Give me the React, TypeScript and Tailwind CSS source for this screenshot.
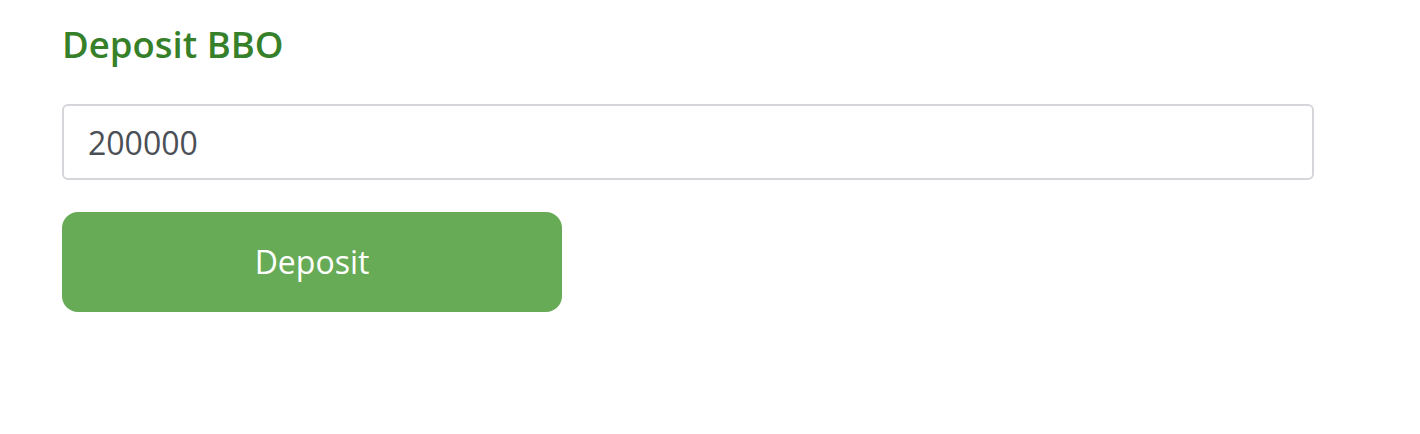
import React from 'react';

export default function App() {
  return (
    <div className="min-h-screen bg-white font-['Open_Sans',sans-serif]">
      <div className="pl-[62px] pt-[20px] w-[1314px]">
        <h2 className="text-[36.5px] leading-[48px] font-semibold text-[#37802a]">Deposit BBO</h2>
        <input
          type="text"
          defaultValue="200000"
          className="mt-[36px] block w-full h-[76px] rounded-[6px] border-2 border-[#d4d6d9] px-[24px] text-[32px] text-[#4b4f56] outline-none"
        />
        <button className="mt-[32px] block w-[500px] h-[100px] rounded-[16px] bg-[#68ab57] text-white text-[32px]">
          Deposit
        </button>
      </div>
    </div>
  );
}
